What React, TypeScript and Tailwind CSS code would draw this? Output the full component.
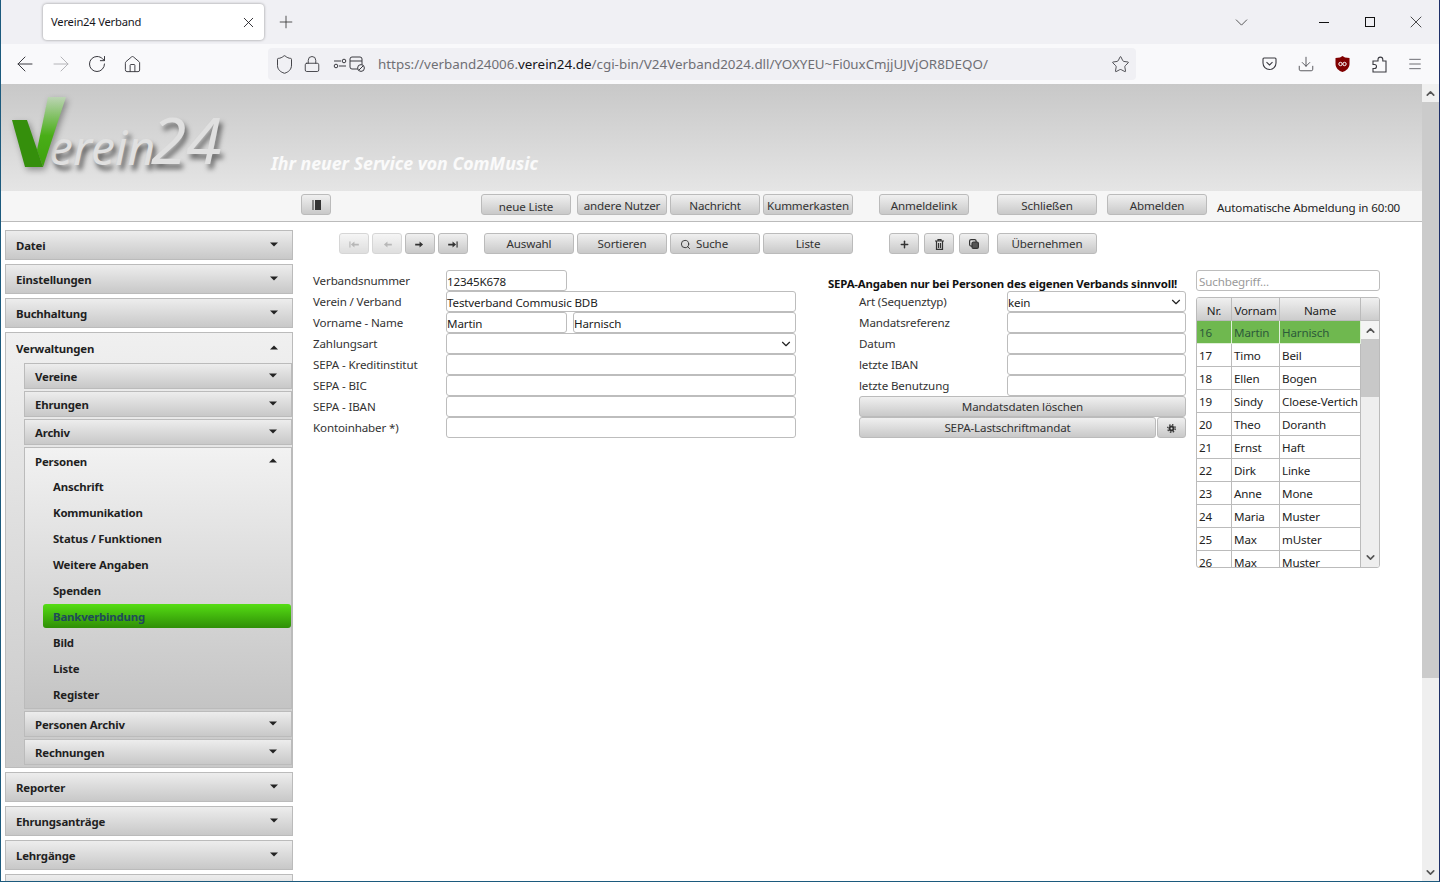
import React from "react";
import { ArrowLeft, ArrowRight, RotateCw, House, Shield, Lock, Star, Download, Menu, Plus, X, ChevronDown, ChevronUp, Search } from "lucide-react";

const font = "font-['Noto_Sans','Liberation_Sans',sans-serif]";
const reg = "text-[11.6px] tracking-[-0.14px]";
const bold = "text-[11.4px] tracking-[-0.17px] font-bold";

function Btn({ w, children, ml = "", dim = false, pt = "pt-px" }: { w: string; children?: React.ReactNode; ml?: string; dim?: boolean; pt?: string }) {
  return (
    <button className={`${w} ${ml} ${pt} ${reg} h-[21px] shrink-0 flex items-center justify-center gap-[5px] rounded-[3px] border border-[#bbbbbb] bg-gradient-to-b from-[#f0f0f0] to-[#c9c9c9] leading-none ${dim ? "opacity-60 text-[#888888]" : "text-[#333333]"}`}>
      {children}
    </button>
  );
}

function Caret({ up = false }: { up?: boolean }) {
  return (
    <svg width="8" height="5" viewBox="0 0 8 5" className="shrink-0">
      <path d={up ? "M0 4.5 L8 4.5 L4 0.5 Z" : "M0 0.5 L8 0.5 L4 4.5 Z"} fill="#222" />
    </svg>
  );
}

function NavArrow({ dir, stop = false }: { dir: "l" | "r"; stop?: boolean }) {
  return (
    <svg width="10" height="7" viewBox="0 0 11 8" fill="currentColor" className={dir === "l" ? "-scale-x-100" : ""}>
      <path d="M0 3 H5 V0.5 L9 4 L5 7.5 V5 H0 Z" />
      {stop && <rect x="9.5" y="0.5" width="1.3" height="7" />}
    </svg>
  );
}

function TopBar({ label }: { label: string }) {
  return (
    <div className={`${bold} h-[30px] shrink-0 flex items-center justify-between pl-[10px] pr-[14px] pt-px border border-[#bbbbbb] bg-gradient-to-b from-[#ededed] to-[#c8c8c8] text-[#1f1f1f]`}>
      <span>{label}</span>
      <span className="-mt-[2px]"><Caret /></span>
    </div>
  );
}

function SubBar({ label }: { label: string }) {
  return (
    <div className={`${bold} h-[26px] shrink-0 flex items-center justify-between pl-[10px] pr-[14px] pt-[2px] border border-[#bbbbbb] bg-gradient-to-b from-[#ededed] to-[#c8c8c8] text-[#1f1f1f]`}>
      <span>{label}</span>
      <span className="-mt-[3px]"><Caret /></span>
    </div>
  );
}

function Input({ w = "w-full", value = "", select = false }: { w?: string; value?: string; select?: boolean }) {
  return (
    <div className={`${w} ${reg} h-[21px] shrink-0 flex items-center justify-between pl-0 pr-[2px] pt-[2px] bg-white border border-[#bdbdbd] rounded-[3px] text-[#222222]`}>
      <span>{value}</span>
      {select && <ChevronDown size={14} strokeWidth={2} className="text-[#222222] shrink-0 -mt-[2px]" />}
    </div>
  );
}

function Label({ children, w }: { children: React.ReactNode; w: string }) {
  return <div className={`${w} ${reg} shrink-0 leading-[22px] text-[#333333]`}>{children}</div>;
}

function FormRow({ label, children }: { label: string; children: React.ReactNode }) {
  return (
    <div className="flex h-[21px]">
      <Label w="w-[133px]">{label}</Label>
      <div className="flex flex-1 justify-between">{children}</div>
    </div>
  );
}

function SepaRow({ label, value = "", select = false }: { label: string; value?: string; select?: boolean }) {
  return (
    <div className="flex h-[21px]">
      <Label w="w-[148px]">{label}</Label>
      <Input w="w-[179px]" value={value} select={select} />
    </div>
  );
}

const people = [
  ["16", "Martin", "Harnisch"],
  ["17", "Timo", "Beil"],
  ["18", "Ellen", "Bogen"],
  ["19", "Sindy", "Cloese-Vertich"],
  ["20", "Theo", "Doranth"],
  ["21", "Ernst", "Haft"],
  ["22", "Dirk", "Linke"],
  ["23", "Anne", "Mone"],
  ["24", "Maria", "Muster"],
  ["25", "Max", "mUster"],
  ["26", "Max", "Muster"],
];

const personenItems = ["Anschrift", "Kommunikation", "Status / Funktionen", "Weitere Angaben", "Spenden", "Bankverbindung", "Bild", "Liste", "Register"];

export default function App() {
  return (
    <div className={`${font} w-[1440px] h-[882px] overflow-hidden flex flex-col bg-white border-x border-b border-[#1c5a7d] border-r-[#1e3068]`}>
      {/* tab strip */}
      <div className="h-[44px] shrink-0 bg-[#f0f0f4] flex items-center pl-[42px]">
        <div className="w-[221px] h-[36px] flex items-center justify-between pl-[8px] pr-[7px] pt-px bg-white rounded-[4px] shadow-[0_0_3px_rgba(0,0,0,0.4)] text-[11.2px] tracking-[-0.2px] text-[#15141a]">
          <span>Verein24 Verband</span>
          <X size={17} strokeWidth={1.2} />
        </div>
        <Plus size={20} strokeWidth={1} className="ml-[12px] text-[#333]" />
        <div className="flex-1" />
        <ChevronDown size={21} strokeWidth={1} className="text-[#444] mr-[67px]" />
        <div className="w-[10px] h-px bg-[#111] mr-[36px]" />
        <div className="w-[10px] h-[10px] border border-[#111] mr-[31px]" />
        <X size={20} strokeWidth={0.9} className="text-[#111] mr-[13px]" />
      </div>
      {/* nav bar */}
      <div className="h-[40px] shrink-0 bg-[#f9f9fb] flex items-center pl-[12px] text-[#3a3a40]">
        <ArrowLeft size={24} strokeWidth={1} />
        <ArrowRight size={24} strokeWidth={1} className="ml-[12px] text-[#b4b4b8]" />
        <RotateCw size={20} strokeWidth={1.2} className="ml-[14px]" />
        <House size={19} strokeWidth={1.2} className="ml-[16px]" />
        <div className="ml-[126px] w-[868px] h-[32px] shrink-0 rounded-[4px] bg-[#f0f0f4] flex items-center pl-[6px] pr-[6px]">
          <Shield size={21} strokeWidth={1.1} />
          <Lock size={18} strokeWidth={1.2} className="ml-[8px]" />
          <svg width="36" height="18" viewBox="0 0 36 18" fill="none" stroke="#3a3a40" strokeWidth="1" className="ml-[12px]">
            <circle cx="3" cy="11" r="1.8" /><line x1="6" y1="11" x2="13" y2="11" /><circle cx="11" cy="6" r="1.8" /><line x1="1" y1="6" x2="8" y2="6" />
            <rect x="17" y="2" width="12" height="12" rx="2" /><line x1="17" y1="6" x2="29" y2="6" /><circle cx="28" cy="13" r="3.4" fill="#f0f0f4" /><line x1="26" y1="15" x2="30" y2="11" />
          </svg>
          <div className="ml-[9px] pt-px flex-1 text-[13.38px] text-[#6f6f74] whitespace-nowrap overflow-hidden">
            https://verband24006.<span className="text-[#15141a]">verein24.de</span>/cgi-bin/V24Verband2024.dll/YOXYEU~Fi0uxCmjjUJVjOR8DEQO/
          </div>
          <Star size={19} strokeWidth={1.1} />
        </div>
        <div className="flex-1" />
        <svg width="15" height="14" viewBox="0 0 15 14" fill="none" stroke="#3a3a40" strokeWidth="1.1" className="mr-[20px]">
          <path d="M2 1 H13 A1 1 0 0 1 14 2 V6 A6.5 6.5 0 0 1 1 6 V2 A1 1 0 0 1 2 1 Z" /><path d="M4.5 5.2 L7.5 8 L10.5 5.2" />
        </svg>
        <Download size={18} strokeWidth={1.1} className="mr-[20px]" />
        <svg width="15" height="16" viewBox="0 0 15 16" className="mr-[22px]">
          <path d="M7.5 0 L10 1.6 L14.5 2 V8 C14.5 12 11 15 7.5 16 C4 15 .5 12 .5 8 V2 L5 1.6 Z" fill="#800000" />
          <circle cx="5.5" cy="8" r="1.7" fill="none" stroke="#fff" strokeWidth="1" /><circle cx="9.5" cy="8" r="1.7" fill="none" stroke="#fff" strokeWidth="1" />
        </svg>
        <svg width="15" height="17" viewBox="0 0 15 17" fill="none" stroke="#3a3a40" strokeWidth="1.1" className="mr-[20px]">
          <path d="M1 16 V12.5 H2.5 a2 2 0 0 0 0 -4 H1 V5 H6 V3.5 a2.4 2.4 0 0 1 4.8 0 V5 H14 V16 Z" />
        </svg>
        <Menu size={16} strokeWidth={1.1} className="mr-[16px]" />
      </div>
      {/* page */}
      <div className="flex-1 min-h-0 flex">
        <div className="flex-1 min-w-0 flex flex-col">
          {/* banner */}
          <div className="h-[107px] shrink-0 bg-gradient-to-b from-[#c8c8c8] to-[#e5e5e5] flex items-end overflow-hidden">
            <div className="relative w-[270px] h-[107px] shrink-0">
              <span className="absolute left-[48px] top-[33px] font-['Liberation_Serif',serif] italic text-[48px] leading-[60px] text-[#e0e0e0] [text-shadow:3px_5px_5px_rgba(0,0,0,0.6)]">erein</span>
              <span className="absolute left-[150px] top-[21px] font-['Liberation_Serif',serif] italic text-[64px] leading-[70px] text-[#e0e0e0] [text-shadow:3px_5px_5px_rgba(0,0,0,0.5)]">24</span>
              <svg width="62" height="84" viewBox="0 0 62 84" className="absolute left-[8px] top-[6px] drop-shadow-[2px_3px_3px_rgba(0,0,0,0.35)]">
                <defs>
                  <linearGradient id="vr" x1="0" y1="0" x2="0" y2="1">
                    <stop offset="0" stopColor="#bcd4b4" />
                    <stop offset="0.55" stopColor="#49ae17" />
                    <stop offset="1" stopColor="#3ea00e" />
                  </linearGradient>
                </defs>
                <path d="M39 7 H57 L34 77 L28 60 Z" fill="url(#vr)" />
                <path d="M3 30 H18 L34 77 H16 Z" fill="#358f0c" />
              </svg>
            </div>
            <div className="pb-[16px] text-[17.7px] leading-[24px] font-bold italic text-white/85 whitespace-nowrap">Ihr neuer Service von ComMusic</div>
          </div>
          {/* toolbar */}
          <div className="h-[31px] shrink-0 bg-[#f6f6f6] border-b border-[#bbbbbb] flex items-start pt-[3px] pl-[300px]">
            <Btn w="w-[30px]">
              <svg width="9" height="10" viewBox="0 0 9 10"><rect x="3" width="6" height="10" fill="#333" /><path d="M0 1H2M0 3H2M0 5H2M0 7H2M0 9H2" stroke="#333" /></svg>
            </Btn>
            <Btn w="w-[90px]" ml="ml-[150px]" pt="pt-[4px]">neue Liste</Btn>
            <Btn w="w-[90px]" ml="ml-[6px]" pt="pt-[2px]">andere Nutzer</Btn>
            <Btn w="w-[90px]" ml="ml-[3px]" pt="pt-[2px]">Nachricht</Btn>
            <Btn w="w-[90px]" ml="ml-[3px]" pt="pt-[2px]">Kummerkasten</Btn>
            <Btn w="w-[90px]" ml="ml-[26px]" pt="pt-[2px]">Anmeldelink</Btn>
            <Btn w="w-[100px]" ml="ml-[28px]" pt="pt-[2px]">Schließen</Btn>
            <Btn w="w-[100px]" ml="ml-[10px]" pt="pt-[2px]">Abmelden</Btn>
            <span className={`${reg} ml-[10px] leading-[28px] text-[#222222] whitespace-nowrap`}>Automatische Abmeldung in 60:00</span>
          </div>
          {/* body */}
          <div className="flex-1 min-h-0 flex overflow-hidden">
            {/* sidebar */}
            <div className="w-[288px] ml-[4px] mt-[8px] shrink-0 flex flex-col gap-[4px]">
              <TopBar label="Datei" />
              <TopBar label="Einstellungen" />
              <TopBar label="Buchhaltung" />
              <div className="h-[436px] shrink-0 border border-[#bbbbbb] bg-gradient-to-b from-[#f0f0f0] to-[#c9c9c9] flex flex-col">
                <div className={`${bold} h-[30px] shrink-0 flex items-center justify-between pl-[10px] pr-[14px] pt-px text-[#1f1f1f]`}>
                  <span>Verwaltungen</span>
                  <span className="-mt-[2px]"><Caret up /></span>
                </div>
                <div className="ml-[18px] flex flex-col gap-[2px]">
                  <SubBar label="Vereine" />
                  <SubBar label="Ehrungen" />
                  <SubBar label="Archiv" />
                  <div className="h-[262px] shrink-0 border border-[#bbbbbb] bg-gradient-to-b from-[#f2f2f2] to-[#c4c4c4] flex flex-col">
                    <div className={`${bold} h-[26px] shrink-0 flex items-center justify-between pl-[10px] pr-[14px] pt-px text-[#1f1f1f]`}>
                      <span>Personen</span>
                      <span className="-mt-[2px]"><Caret up /></span>
                    </div>
                    {personenItems.map((t) =>
                      t === "Bankverbindung" ? (
                        <div key={t} className="h-[26px] shrink-0 pl-[18px]">
                          <div className={`${bold} h-[24px] rounded-[3px] bg-gradient-to-b from-[#55dd14] to-[#2f8f07] pl-[10px] leading-[26px] text-[#1f4a5a]`}>{t}</div>
                        </div>
                      ) : (
                        <div key={t} className={`${bold} h-[26px] shrink-0 pl-[28px] leading-[26px] text-[#1f1f1f]`}>{t}</div>
                      )
                    )}
                  </div>
                  <SubBar label="Personen Archiv" />
                  <SubBar label="Rechnungen" />
                </div>
              </div>
              <TopBar label="Reporter" />
              <TopBar label="Ehrungsanträge" />
              <TopBar label="Lehrgänge" />
              <TopBar label="" />
            </div>
            {/* main */}
            <div className="flex-1 min-w-0 flex flex-col pt-[11px] pl-[46px]">
              <div className="flex h-[21px] shrink-0">
                <Btn w="w-[30px]" dim><NavArrow dir="l" stop /></Btn>
                <Btn w="w-[30px]" ml="ml-[3px]" dim><NavArrow dir="l" /></Btn>
                <Btn w="w-[30px]" ml="ml-[3px]"><NavArrow dir="r" /></Btn>
                <Btn w="w-[30px]" ml="ml-[3px]"><NavArrow dir="r" stop /></Btn>
                <Btn w="w-[90px]" ml="ml-[16px]">Auswahl</Btn>
                <Btn w="w-[90px]" ml="ml-[3px]">Sortieren</Btn>
                <Btn w="w-[90px]" ml="ml-[3px]"><Search size={11} strokeWidth={2} />Suche<span className="w-[17px]" /></Btn>
                <Btn w="w-[90px]" ml="ml-[3px]">Liste</Btn>
                <Btn w="w-[30px]" ml="ml-[36px]"><Plus size={11} strokeWidth={3.2} /></Btn>
                <Btn w="w-[30px]" ml="ml-[5px]">
                  <svg width="9" height="11" viewBox="0 0 9 11" fill="none" stroke="#333" strokeWidth="1.2"><path d="M0 2H9M3 2V.6H6V2M1.5 2V10.4H7.5V2M3.5 4V9M5.5 4V9" /></svg>
                </Btn>
                <Btn w="w-[30px]" ml="ml-[5px]">
                  <svg width="10" height="10" viewBox="0 0 10 10" fill="none" stroke="#333" strokeWidth="1.2"><rect x="0.6" y="0.6" width="6.5" height="6.5" rx="1.5" /><rect x="3" y="3" width="6.4" height="6.4" rx="1.5" fill="#555" /></svg>
                </Btn>
                <Btn w="w-[100px]" ml="ml-[8px]">Übernehmen</Btn>
              </div>
              <div className="flex mt-[16px] items-start">
                {/* left form */}
                <div className="w-[483px] shrink-0 flex flex-col ml-[-26px]">
                  <FormRow label="Verbandsnummer"><Input w="w-[121px]" value="12345K678" /></FormRow>
                  <FormRow label="Verein / Verband"><Input value="Testverband Commusic BDB" /></FormRow>
                  <FormRow label="Vorname - Name"><Input w="w-[121px]" value="Martin" /><Input w="w-[223px]" value="Harnisch" /></FormRow>
                  <FormRow label="Zahlungsart"><Input select /></FormRow>
                  <FormRow label="SEPA - Kreditinstitut"><Input /></FormRow>
                  <FormRow label="SEPA - BIC"><Input /></FormRow>
                  <FormRow label="SEPA - IBAN"><Input /></FormRow>
                  <FormRow label="Kontoinhaber *)"><Input /></FormRow>
                </div>
                {/* sepa */}
                <div className="ml-[32px] w-[358px] shrink-0 flex flex-col">
                  <div className={`${bold} h-[21px] leading-[28px] text-[#111111] whitespace-nowrap`}>SEPA-Angaben nur bei Personen des eigenen Verbands sinnvoll!</div>
                  <div className="ml-[31px] flex flex-col">
                    <SepaRow label="Art (Sequenztyp)" value="kein" select />
                    <SepaRow label="Mandatsreferenz" />
                    <SepaRow label="Datum" />
                    <SepaRow label="letzte IBAN" />
                    <SepaRow label="letzte Benutzung" />
                    <Btn w="w-[327px]">Mandatsdaten löschen</Btn>
                    <div className="flex">
                      <Btn w="w-[297px]">SEPA-Lastschriftmandat</Btn>
                      <Btn w="w-[29px]" ml="ml-px">
                        <svg width="9" height="9" viewBox="0 0 9 9"><circle cx="4.5" cy="4.5" r="2.9" fill="#333" /><circle cx="4.5" cy="4.5" r="3.8" fill="none" stroke="#333" strokeWidth="1.3" strokeDasharray="1.5 1.5" /><circle cx="4.5" cy="4.5" r="1" fill="#ddd" /></svg>
                      </Btn>
                    </div>
                  </div>
                </div>
                {/* list */}
                <div className="ml-[10px] w-[184px] shrink-0 flex flex-col gap-[6px]">
                  <div className={`${reg} h-[21px] border border-[#bdbdbd] rounded-[3px] pl-[2px] leading-[21px] text-[#9a9a9a]`}>Suchbegriff...</div>
                  <div className={`${reg} h-[271px] border border-[#bbbbbb] rounded-[3px] overflow-hidden flex flex-col text-[#222222]`}>
                    <div className="h-[23px] shrink-0 flex bg-gradient-to-b from-[#f0f0f0] to-[#cccccc] border-b border-[#bbbbbb] leading-[25px] text-center">
                      <div className="w-[35px] border-r border-[#bbbbbb]">Nr.</div>
                      <div className="w-[48px] border-r border-[#bbbbbb] overflow-hidden whitespace-nowrap">Vornam</div>
                      <div className="w-[81px] border-r border-[#bbbbbb]">Name</div>
                      <div className="flex-1" />
                    </div>
                    <div className="flex-1 min-h-0 flex">
                      <div className="w-[164px] shrink-0 overflow-hidden flex flex-col">
                        {people.map((p, i) => (
                          <div key={p[0]} className={`h-[23px] shrink-0 flex leading-[24px] ${i === 0 ? "bg-[#6fb84f] text-[#2c5a3a] border-b border-[#dff0d8]" : "border-b border-[#bbbbbb]"}`}>
                            <div className={`w-[35px] pl-[2px] border-r ${i === 0 ? "border-[#dff0d8]" : "border-[#bbbbbb]"}`}>{p[0]}</div>
                            <div className={`w-[48px] pl-[2px] border-r ${i === 0 ? "border-[#dff0d8]" : "border-[#bbbbbb]"}`}>{p[1]}</div>
                            <div className={`w-[81px] pl-[2px] border-r whitespace-nowrap ${i === 0 ? "border-[#dff0d8]" : "border-[#bbbbbb]"}`}>{p[2]}</div>
                          </div>
                        ))}
                      </div>
                      <div className="flex-1 bg-[#eeeeee] flex flex-col items-center">
                        <div className="h-[18px] w-full bg-[#f4f4f4] flex items-center justify-center"><ChevronUp size={13} strokeWidth={3} className="text-[#555]" /></div>
                        <div className="h-[58px] w-full bg-[#c8c8c8]" />
                        <div className="flex-1" />
                        <ChevronDown size={13} strokeWidth={3} className="text-[#555] mb-[3px]" />
                      </div>
                    </div>
                  </div>
                </div>
              </div>
            </div>
          </div>
        </div>
        {/* page scrollbar */}
        <div className="w-[17px] shrink-0 bg-[#efefef] flex flex-col">
          <div className="h-[18px] bg-[#f0f0f0] flex items-center justify-center"><ChevronUp size={13} strokeWidth={3} className="text-[#555]" /></div>
          <div className="h-[576px] bg-[#cbcbcb]" />
          <div className="flex-1" />
          <div className="h-[17px] flex items-center justify-center"><ChevronDown size={13} strokeWidth={3} className="text-[#555]" /></div>
        </div>
      </div>
    </div>
  );
}
